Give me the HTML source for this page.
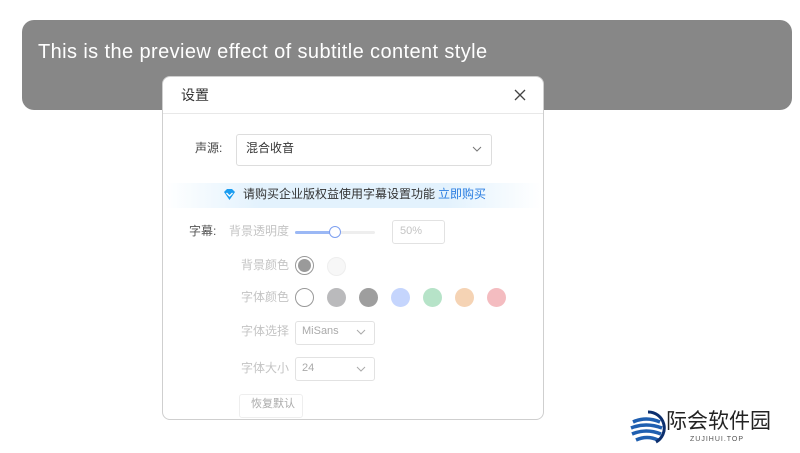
<!DOCTYPE html>
<html><head><meta charset="utf-8"><style>
body{margin:0;width:800px;height:453px;background:#fff;position:relative;overflow:hidden;font-family:"Liberation Sans","Noto Sans CJK SC",sans-serif;}
.a{position:absolute;line-height:1.2}
.banner{left:22px;top:20px;width:770px;height:90px;background:#878787;border-radius:12px}
.btxt{left:38px;top:40px;color:#fff;font-size:20px;letter-spacing:0.4px}
.dlg{left:162px;top:76px;width:380px;height:342px;background:#fff;border:1px solid #cfcfcf;border-radius:8px}
.gl{color:#c4c4c4;font-size:12px}
.c{position:absolute;width:19px;height:19px;border-radius:50%}
.sel{border:1px solid #e2e2e2;border-radius:3px;background:#fff}
</style></head><body>
<div class="a banner"></div>
<div class="a btxt">This is the preview effect of subtitle content style</div>
<div class="a dlg"></div>
<div class="a" style="left:181px;top:87px;font-size:14px;color:#333">设置</div>
<svg class="a" style="left:514px;top:89px" width="12" height="12"><path d="M1 1L11 11M11 1L1 11" stroke="#444" stroke-width="1.3"/></svg>
<div class="a" style="left:163px;top:113px;width:380px;height:1px;background:#e8e8e8"></div>
<div class="a" style="left:195px;top:141px;font-size:12px;color:#444">声源:</div>
<div class="a sel" style="left:236px;top:134px;width:254px;height:30px;border-color:#ddd"></div>
<div class="a" style="left:246px;top:141px;font-size:12px;color:#333">混合收音</div>
<svg class="a" style="left:472px;top:146px" width="10" height="6"><path d="M1 1L5 5L9 1" stroke="#777" fill="none"/></svg>
<div class="a" style="left:165px;top:183px;width:376px;height:25px;background:linear-gradient(90deg,rgba(230,243,253,0),#e3f2fd 25%,#e3f2fd 75%,rgba(230,243,253,0))"></div>
<svg class="a" style="left:223px;top:189px" width="13" height="12"><path d="M1 3L4 0H9L12 3L6.5 11Z" fill="#1a9cf0"/><path d="M3.5 4L6.5 7L9.5 4" stroke="#fff" stroke-width="1.3" fill="none"/></svg>
<div class="a" style="left:243px;top:187px;font-size:12px;color:#333">请购买企业版权益使用字幕设置功能</div>
<div class="a" style="left:438px;top:187px;font-size:12px;color:#2a7de1">立即购买</div>
<div class="a" style="left:189px;top:224px;font-size:12px;color:#555">字幕:</div>
<div class="a gl" style="left:229px;top:224px">背景透明度</div>
<div class="a" style="left:295px;top:231px;width:80px;height:3px;background:#eee;border-radius:2px"></div>
<div class="a" style="left:295px;top:231px;width:40px;height:3px;background:#9bb8f5;border-radius:2px"></div>
<div class="a" style="left:329px;top:226px;width:10px;height:10px;border:1.5px solid #7d9ff0;border-radius:50%;background:#fff"></div>
<div class="a sel" style="left:392px;top:220px;width:51px;height:22px"></div>
<div class="a gl" style="left:400px;top:225px;font-size:11px">50%</div>
<div class="a gl" style="left:241px;top:258px">背景颜色</div>
<div class="c" style="left:295px;top:256px;border:1px solid #999;width:17px;height:17px;background:#fff"></div>
<div class="c" style="left:298px;top:259px;width:13px;height:13px;background:#9a9a9a"></div>
<div class="c" style="left:327px;top:257px;background:#f7f7f7;border:1px solid #eee;width:17px;height:17px"></div>
<div class="a gl" style="left:241px;top:290px">字体颜色</div>
<div class="c" style="left:295px;top:288px;border:1px solid #999;width:17px;height:17px;background:#fff"></div>
<div class="c" style="left:327px;top:288px;background:#bababc"></div>
<div class="c" style="left:359px;top:288px;background:#9e9e9e"></div>
<div class="c" style="left:391px;top:288px;background:#c5d5fd"></div>
<div class="c" style="left:423px;top:288px;background:#b6e3c8"></div>
<div class="c" style="left:455px;top:288px;background:#f5d3b4"></div>
<div class="c" style="left:487px;top:288px;background:#f4bcc0"></div>
<div class="a gl" style="left:241px;top:324px">字体选择</div>
<div class="a sel" style="left:295px;top:321px;width:78px;height:22px"></div>
<div class="a" style="left:302px;top:325px;font-size:11px;color:#aaa">MiSans</div>
<svg class="a" style="left:356px;top:329px" width="10" height="6"><path d="M1 1L5 5L9 1" stroke="#aaa" fill="none"/></svg>
<div class="a gl" style="left:241px;top:361px">字体大小</div>
<div class="a sel" style="left:295px;top:357px;width:78px;height:22px"></div>
<div class="a" style="left:302px;top:362px;font-size:11px;color:#aaa">24</div>
<svg class="a" style="left:356px;top:366px" width="10" height="6"><path d="M1 1L5 5L9 1" stroke="#aaa" fill="none"/></svg>
<div class="a sel" style="left:239px;top:394px;width:62px;height:22px;border-color:#eee"></div>
<div class="a" style="left:251px;top:398px;font-size:11px;color:#aaa">恢复默认</div>
<svg class="a" style="left:628px;top:410px" width="38" height="36"><circle cx="19" cy="18" r="16" fill="#fff"/><path d="M5 12Q18 6 32 12M3 18Q18 12 34 18M4 24Q18 18 33 24M8 30Q19 25 30 30" stroke="#1f5fb0" stroke-width="3.5" fill="none"/><path d="M20 2A16 16 0 0 1 28 32" stroke="#0c2f6e" stroke-width="3" fill="none"/></svg>
<div class="a" style="left:666px;top:409px;font-size:21px;color:#222">际会软件园</div>
<div class="a" style="left:690px;top:436px;font-size:7px;color:#555;letter-spacing:1px">ZUJIHUI.TOP</div>
</body></html>
